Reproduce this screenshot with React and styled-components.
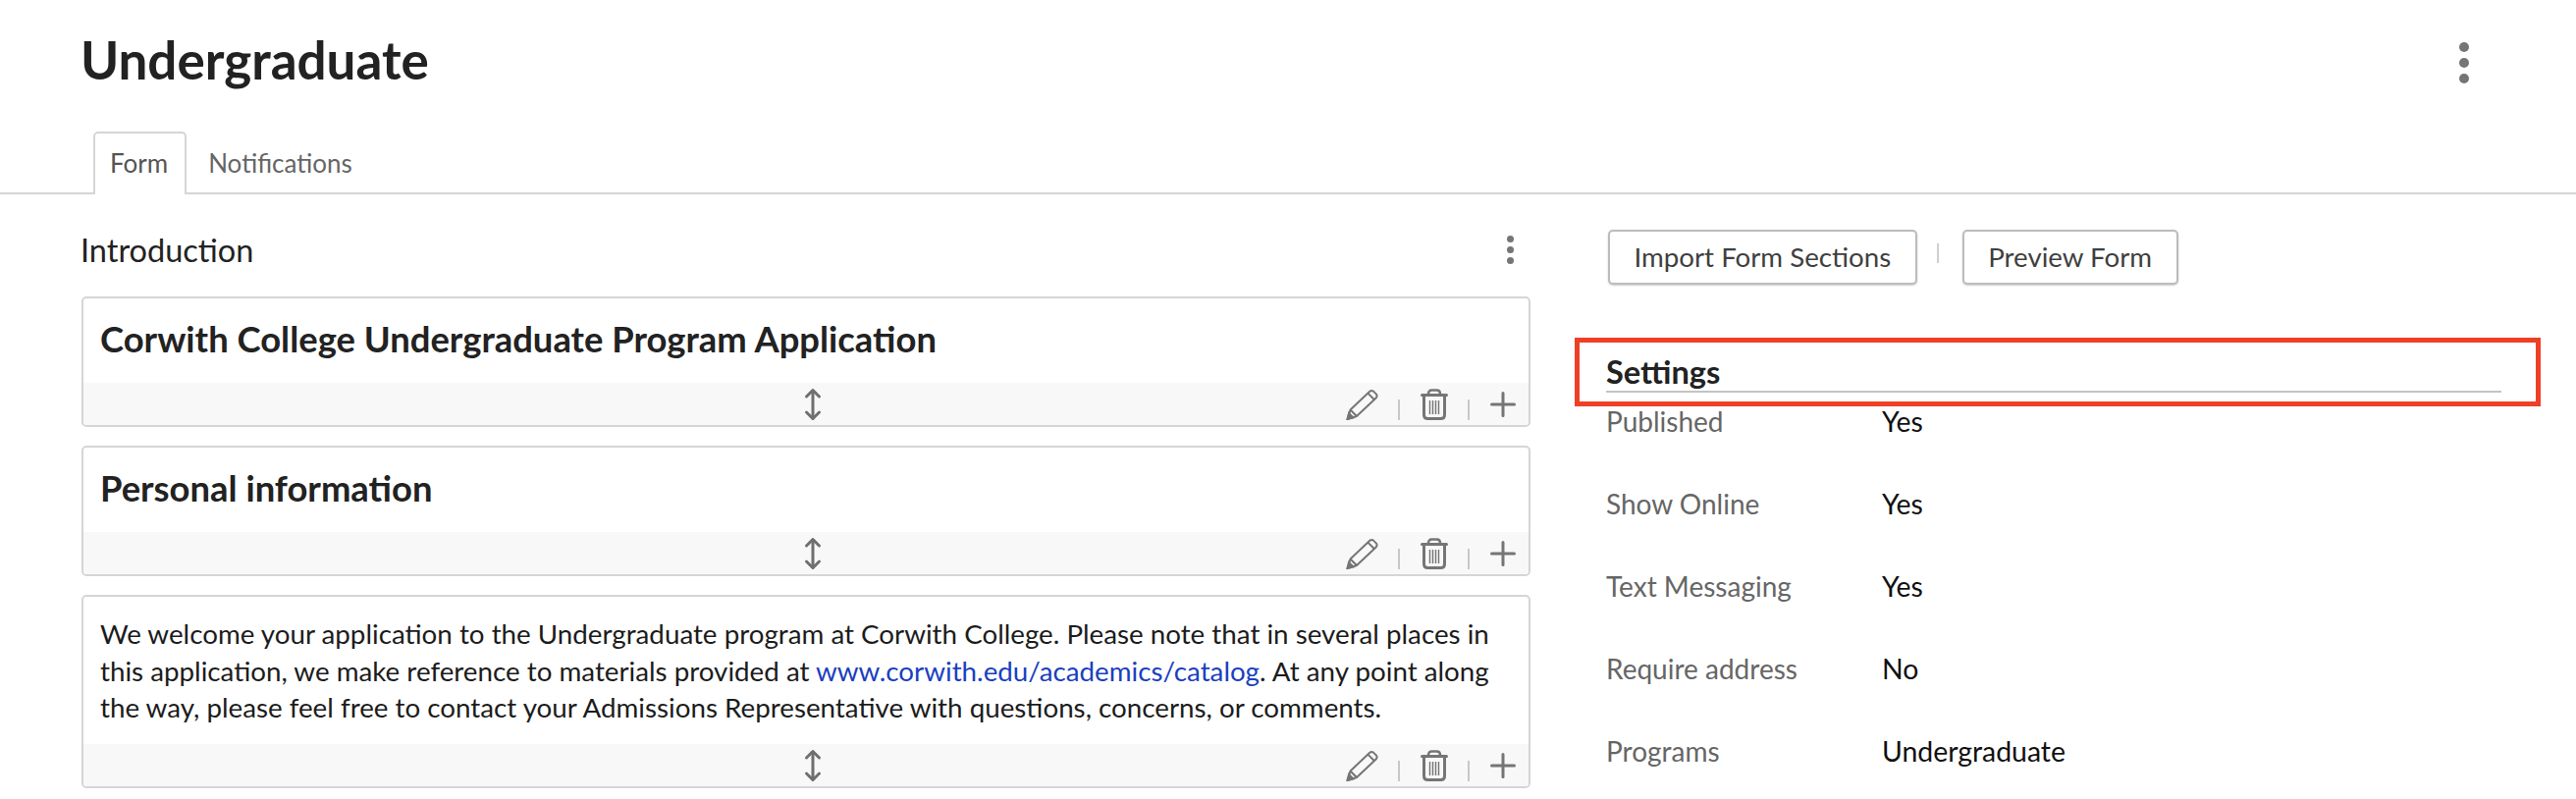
import styled, { createGlobalStyle } from 'styled-components'

const GlobalStyle = createGlobalStyle`
  html, body {
    margin: 0;
    padding: 0;
    background: #fff;
    font-family: Lato, "Liberation Sans", sans-serif;
  }
`

const Page = styled.div`
  position: relative;
  width: 2624px;
  height: 814px;
  overflow: hidden;
  color: #1f1f1f;
`

const Header = styled.header`
  display: flex;
  justify-content: space-between;
  align-items: flex-start;
  height: 134px;
  padding: 30px 83px 0 82px;
  box-sizing: border-box;
`

const Title = styled.h1`
  margin: 0;
  font-size: 53px;
  line-height: 62px;
  font-weight: 700;
  color: #222;
`

const Dots = styled.div`
  display: flex;
  flex-direction: column;
  gap: ${p => p.$gap}px;
  margin: ${p => p.$margin};
  span {
    display: block;
    width: ${p => p.$size}px;
    height: ${p => p.$size}px;
    border-radius: 50%;
    background: #757575;
  }
`

const TabBar = styled.nav`
  display: flex;
  height: 64px;
  padding-left: 95px;
  box-sizing: border-box;
  border-bottom: 2px solid #d5d5d5;
`

const Tab = styled.div`
  height: 64px;
  box-sizing: border-box;
  font-size: 26px;
  line-height: 60px;
  color: #666;
  padding: 2px 16px 0 22px;
  ${p => p.$active && `
    padding: 0 17px 0 15px;
    border: 2px solid #d5d5d5;
    border-bottom: 0;
    border-radius: 5px 5px 0 0;
    background: #fff;
    color: #555;
  `}
`

const Content = styled.div`
  display: grid;
  grid-template-columns: 1476px 1fr;
  padding: 36px 36px 0 83px;
  column-gap: 77px;
`

const Column = styled.section`
  display: flex;
  flex-direction: column;
`

const SectionHead = styled.div`
  display: flex;
  justify-content: space-between;
  align-items: flex-start;
  height: 68px;
`

const SectionTitle = styled.div`
  margin-left: -1px;
  padding-top: 1px;
  font-size: 32.5px;
  line-height: 40px;
  color: #222;
`

const Card = styled.article`
  display: flex;
  flex-direction: column;
  justify-content: space-between;
  height: ${p => p.$height}px;
  margin-bottom: 19px;
  box-sizing: border-box;
  border: 2px solid #d5d5d5;
  border-radius: 5px;
  overflow: hidden;
`

const CardHeading = styled.h2`
  margin: 0;
  padding: 18px 17px 0;
  font-size: 36.4px;
  line-height: 46px;
  font-weight: 700;
  color: #222;
`

const CardText = styled.p`
  margin: 0;
  padding: 19px 17px 0;
  font-size: 27.75px;
  line-height: 37.5px;
  color: #1c1c1c;
  a {
    color: #1a3fc0;
    text-decoration: none;
  }
`

const CardFooter = styled.div`
  position: relative;
  display: flex;
  justify-content: center;
  align-items: center;
  height: 43px;
  padding-left: 14px;
  box-sizing: border-box;
  background: #f8f8f8;
`

const Tools = styled.div`
  position: absolute;
  right: 13px;
  top: 6px;
  display: flex;
  align-items: center;
  color: #757575;
`

const ToolSep = styled.span`
  display: block;
  width: 2px;
  height: 21px;
  margin: 11px 21px 0 20px;
  background: #c8c8c8;
`

const Actions = styled.div`
  display: flex;
  align-items: flex-start;
  padding-left: 2px;
  height: 125px;
`

const Button = styled.button`
  height: 56px;
  padding: 0 24.5px 2px;
  background: #fff;
  border: 2px solid #bcbcbc;
  border-radius: 5px;
  box-shadow: 0 1px 2px rgba(0, 0, 0, 0.2);
  font-family: inherit;
  font-size: 27.7px;
  color: #3f3f3f;
`

const ActionSep = styled.span`
  display: block;
  width: 2px;
  height: 20px;
  margin: 14px 24px 0 20px;
  background: #cfcfcf;
`

const SettingsHead = styled.h3`
  margin: 0;
  width: 912px;
  height: 41px;
  box-sizing: border-box;
  border-bottom: 2px solid #c4c4c4;
  font-size: 32.6px;
  line-height: 39px;
  font-weight: 700;
  color: #222;
`

const SettingsRow = styled.div`
  display: grid;
  grid-template-columns: 281px 1fr;
  height: 84px;
  font-size: 28px;
  line-height: 34px;
  padding-top: 12px;
  box-sizing: border-box;
`

const Label = styled.span`
  color: #666;
`

const Value = styled.span`
  font-size: 28.4px;
  color: #111;
`

const Highlight = styled.div`
  position: absolute;
  left: 1604px;
  top: 344px;
  width: 984px;
  height: 70px;
  box-sizing: border-box;
  border: 5px solid #ee4027;
`

const Pencil = () => (
  <svg width="33" height="32" viewBox="0 0 33 32" fill="none" stroke="currentColor" strokeWidth="2">
    <path d="M1.5 31 L4.5 21.5 L24 3 Q26 1.2 28 2.6 L31 5.6 Q32.4 7.6 30.6 9.6 L11 28 Z" strokeLinejoin="round" />
    <path d="M4.5 21.5 L11 28 M22.4 4.6 L29 11.2" />
    <path d="M1.5 31 L3 25 L7.5 29.4 Z" fill="currentColor" />
  </svg>
)

const Trash = () => (
  <svg width="28" height="32" viewBox="0 0 28 32" fill="none" stroke="currentColor">
    <path d="M1.5 6.5 H26.5" strokeWidth="3" strokeLinecap="round" />
    <path d="M8 5.5 Q8 1.5 11.5 1.5 H16.5 Q20 1.5 20 5.5" strokeWidth="2.6" />
    <path d="M3.5 7 V26.5 Q3.5 30.5 7.5 30.5 H20.5 Q24.5 30.5 24.5 26.5 V7" strokeWidth="3" />
    <path d="M9.5 12 V26 M12.5 12 V26 M15.5 12 V26 M18.5 12 V26" strokeWidth="1.4" />
  </svg>
)

const Plus = () => (
  <svg width="26" height="26" viewBox="0 0 26 26" stroke="currentColor" strokeWidth="3" strokeLinecap="round">
    <path d="M13 1.5 V24.5 M1.5 13 H24.5" />
  </svg>
)

const Move = () => (
  <svg width="18" height="34" viewBox="0 0 18 34" fill="none" stroke="#6f6f6f" strokeWidth="3" strokeLinejoin="round" strokeLinecap="round">
    <path d="M9 3 V31" />
    <path d="M2.5 9 L9 2.5 L15.5 9 M2.5 25 L9 31.5 L15.5 25" />
  </svg>
)

const ThreeDots = ({ size, gap, margin }) => (
  <Dots $size={size} $gap={gap} $margin={margin}>
    <span />
    <span />
    <span />
  </Dots>
)

const FormCard = ({ height, children }) => (
  <Card $height={height}>
    {children}
    <CardFooter>
      <Move />
      <Tools>
        <Pencil />
        <ToolSep />
        <Trash />
        <ToolSep />
        <Plus />
      </Tools>
    </CardFooter>
  </Card>
)

const settings = [
  ['Published', 'Yes'],
  ['Show Online', 'Yes'],
  ['Text Messaging', 'Yes'],
  ['Require address', 'No'],
  ['Programs', 'Undergraduate'],
]

export default function App() {
  return (
    <Page>
      <GlobalStyle />
      <Header>
        <Title>Undergraduate</Title>
        <ThreeDots size={10} gap={6} margin="13px 26px 0 0" />
      </Header>
      <TabBar>
        <Tab $active>Form</Tab>
        <Tab>Notifications</Tab>
      </TabBar>
      <Content>
        <Column>
          <SectionHead>
            <SectionTitle>Introduction</SectionTitle>
            <ThreeDots size={7} gap={4} margin="6px 17px 0 0" />
          </SectionHead>
          <FormCard height={133}>
            <CardHeading>Corwith College Undergraduate Program Application</CardHeading>
          </FormCard>
          <FormCard height={133}>
            <CardHeading>Personal information</CardHeading>
          </FormCard>
          <FormCard height={197}>
            <CardText>
              We welcome your application to the Undergraduate program at Corwith College. Please note that in several places in
              this application, we make reference to materials provided at <a href="#catalog">www.corwith.edu/academics/catalog</a>. At any point along
              the way, please feel free to contact your Admissions Representative with questions, concerns, or comments.
            </CardText>
          </FormCard>
        </Column>
        <Column>
          <Actions>
            <Button>Import Form Sections</Button>
            <ActionSep />
            <Button>Preview Form</Button>
          </Actions>
          <SettingsHead>Settings</SettingsHead>
          {settings.map(([label, value]) => (
            <SettingsRow key={label}>
              <Label>{label}</Label>
              <Value>{value}</Value>
            </SettingsRow>
          ))}
        </Column>
      </Content>
      <Highlight />
    </Page>
  )
}
